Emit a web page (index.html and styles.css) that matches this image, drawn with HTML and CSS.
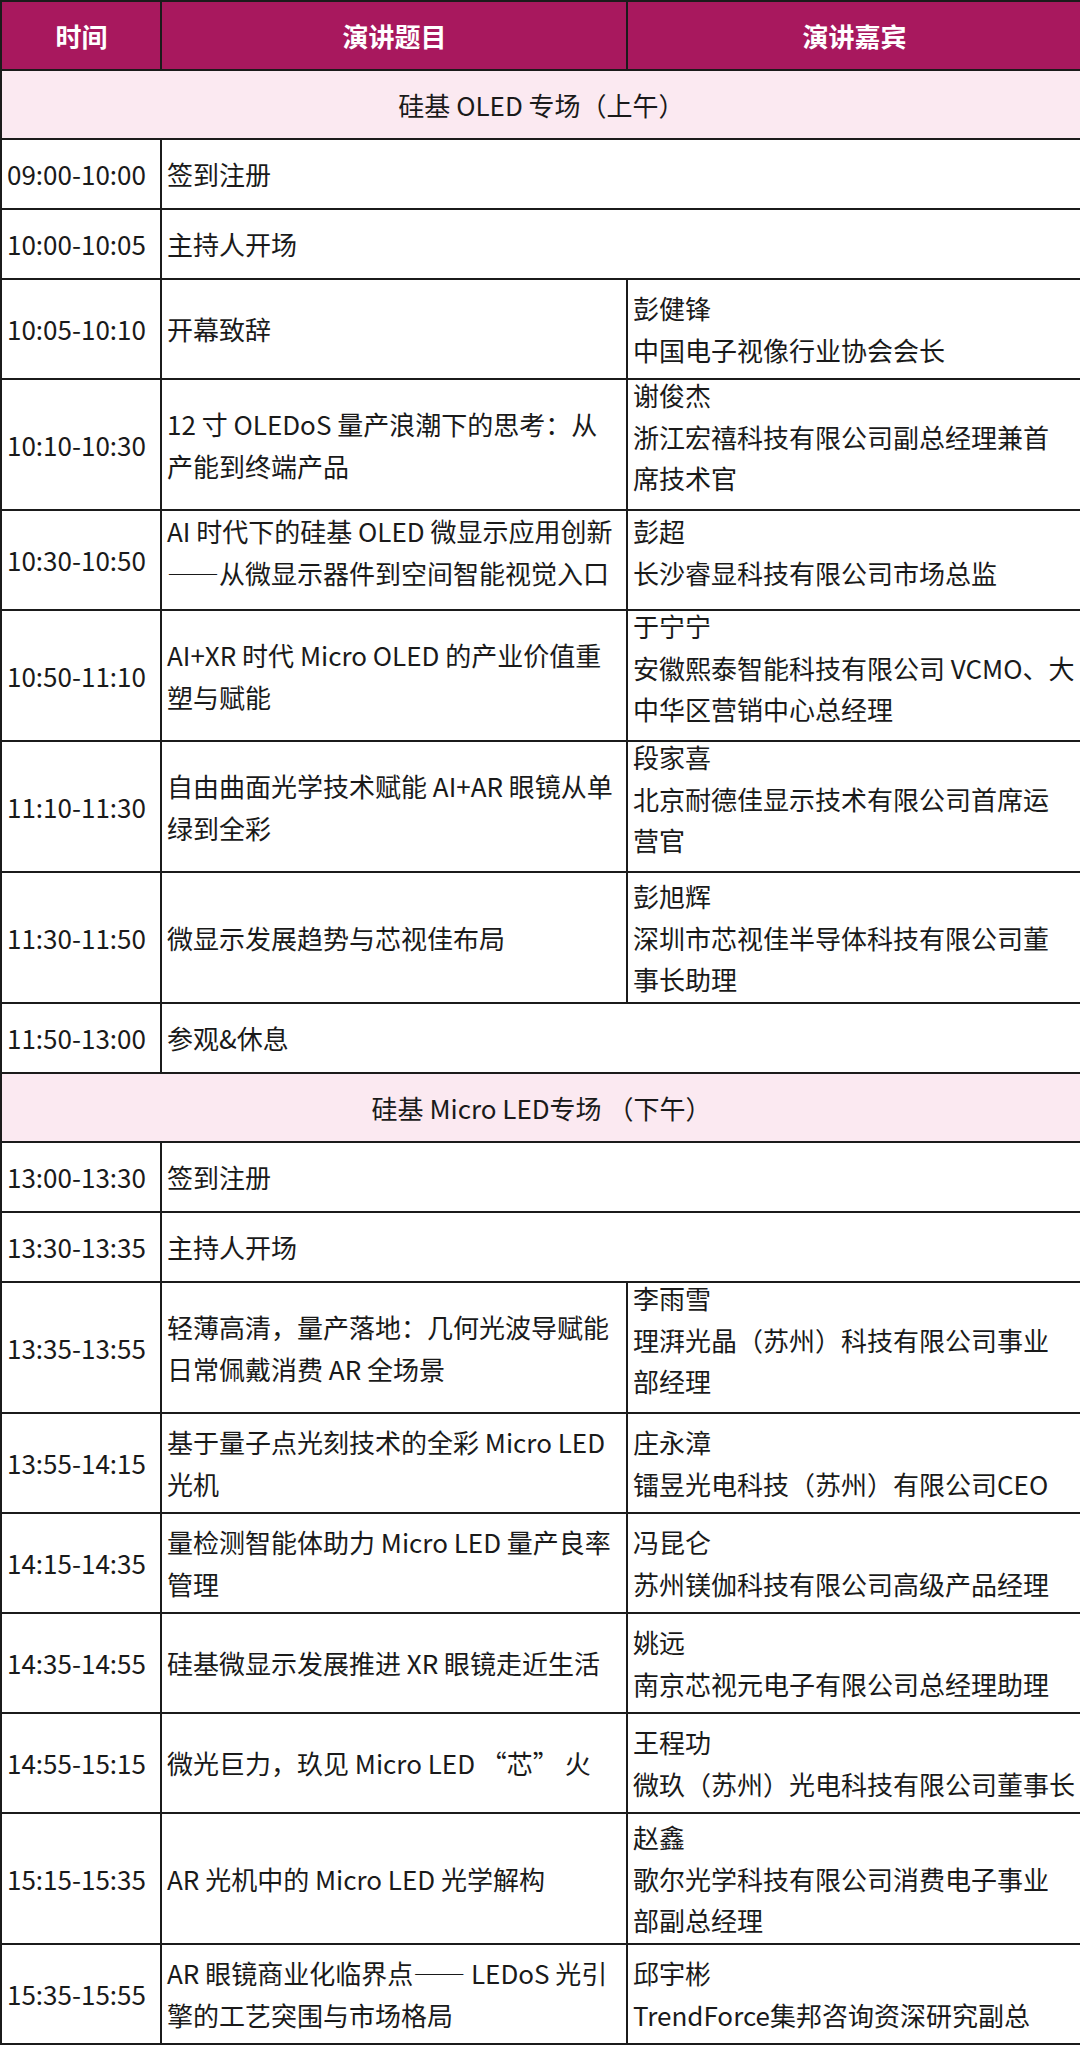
FILE: index.html
```html
<!DOCTYPE html>
<html lang="zh-CN">
<head>
<meta charset="utf-8">
<title>议程</title>
<link rel="stylesheet" href="styles.css">
</head>
<body>
<table class="schedule">
  <colgroup>
    <col class="c-time">
    <col class="c-topic">
    <col class="c-guest">
  </colgroup>
  <thead>
    <tr class="rh">
      <th>时间</th>
      <th>演讲题目</th>
      <th>演讲嘉宾</th>
    </tr>
  </thead>
  <tbody>
    <tr class="rh sec"><td colspan="3">硅基 OLED 专场（上午）</td></tr>
    <tr class="r1"><td>09:00-10:00</td><td colspan="2">签到注册</td></tr>
    <tr class="r1"><td>10:00-10:05</td><td colspan="2">主持人开场</td></tr>
    <tr class="r2"><td>10:05-10:10</td><td>开幕致辞</td><td>彭健锋<br>中国电子视像行业协会会长</td></tr>
    <tr class="r3"><td>10:10-10:30</td><td>12 寸 OLEDoS 量产浪潮下的思考：从<br>产能到终端产品</td><td><div class="up">谢俊杰<br>浙江宏禧科技有限公司副总经理兼首<br>席技术官</div></td></tr>
    <tr class="r2"><td>10:30-10:50</td><td><div class="up">AI 时代下的硅基 OLED 微显示应用创新<br>——从微显示器件到空间智能视觉入口</div></td><td><div class="up">彭超<br>长沙睿显科技有限公司市场总监</div></td></tr>
    <tr class="r3"><td>10:50-11:10</td><td>AI+XR 时代 Micro OLED 的产业价值重<br>塑与赋能</td><td><div class="up">于宁宁<br>安徽熙泰智能科技有限公司 VCMO、大<br>中华区营销中心总经理</div></td></tr>
    <tr class="r3"><td>11:10-11:30</td><td>自由曲面光学技术赋能 AI+AR 眼镜从单<br>绿到全彩</td><td><div class="up">段家喜<br>北京耐德佳显示技术有限公司首席运<br>营官</div></td></tr>
    <tr class="r3"><td>11:30-11:50</td><td>微显示发展趋势与芯视佳布局</td><td>彭旭辉<br>深圳市芯视佳半导体科技有限公司董<br>事长助理</td></tr>
    <tr class="r1"><td>11:50-13:00</td><td colspan="2">参观&amp;休息</td></tr>
    <tr class="rh sec"><td colspan="3">硅基 Micro LED专场 （下午）</td></tr>
    <tr class="r1"><td>13:00-13:30</td><td colspan="2">签到注册</td></tr>
    <tr class="r1"><td>13:30-13:35</td><td colspan="2">主持人开场</td></tr>
    <tr class="r3"><td>13:35-13:55</td><td>轻薄高清，量产落地：几何光波导赋能<br>日常佩戴消费 AR 全场景</td><td><div class="up">李雨雪<br>理湃光晶（苏州）科技有限公司事业<br>部经理</div></td></tr>
    <tr class="r2"><td>13:55-14:15</td><td>基于量子点光刻技术的全彩 Micro LED<br>光机</td><td>庄永漳<br>镭昱光电科技（苏州）有限公司CEO</td></tr>
    <tr class="r2"><td>14:15-14:35</td><td>量检测智能体助力 Micro LED 量产良率<br>管理</td><td>冯昆仑<br>苏州镁伽科技有限公司高级产品经理</td></tr>
    <tr class="r2"><td>14:35-14:55</td><td>硅基微显示发展推进 XR 眼镜走近生活</td><td>姚远<br>南京芯视元电子有限公司总经理助理</td></tr>
    <tr class="r2"><td>14:55-15:15</td><td>微光巨力，玖见 Micro LED “芯” 火</td><td>王程功<br>微玖（苏州）光电科技有限公司董事长</td></tr>
    <tr class="r3"><td>15:15-15:35</td><td>AR 光机中的 Micro LED 光学解构</td><td>赵鑫<br>歌尔光学科技有限公司消费电子事业<br>部副总经理</td></tr>
    <tr class="r2"><td>15:35-15:55</td><td>AR 眼镜商业化临界点—— LEDoS 光引<br>擎的工艺突围与市场格局</td><td>邱宇彬<br>TrendForce集邦咨询资深研究副总</td></tr>
  </tbody>
</table>
</body>
</html>
```
FILE: styles.css
```css
html, body {
  margin: 0;
  padding: 0;
  background: #ffffff;
}

.schedule {
  width: 1080px;
  border-collapse: collapse;
  table-layout: fixed;
  font-family: "Noto Sans CJK SC", "Noto Sans", sans-serif;
  font-size: 26px;
  line-height: 41.7px;
  color: #1a1a1a;
}

.c-time { width: 160px; }
.c-topic { width: 466px; }
.c-guest { width: 454px; }

.schedule th,
.schedule td {
  border: 2px solid #1b1b1b;
  padding: 0 4px 0 5px;
  vertical-align: middle;
  white-space: nowrap;
  text-align: left;
}

.schedule th {
  background: #a8185e;
  color: #ffffff;
  font-weight: 700;
  text-align: center;
}

.sec td {
  background: #fbe9f1;
  text-align: center;
}

/* cells whose text block sits higher than the row centre */
.up {
  margin-top: -16px;
}

.rh { height: 69px; }
.r1 { height: 70px; }
.r2 { height: 100px; }
.r3 { height: 131px; }
```
